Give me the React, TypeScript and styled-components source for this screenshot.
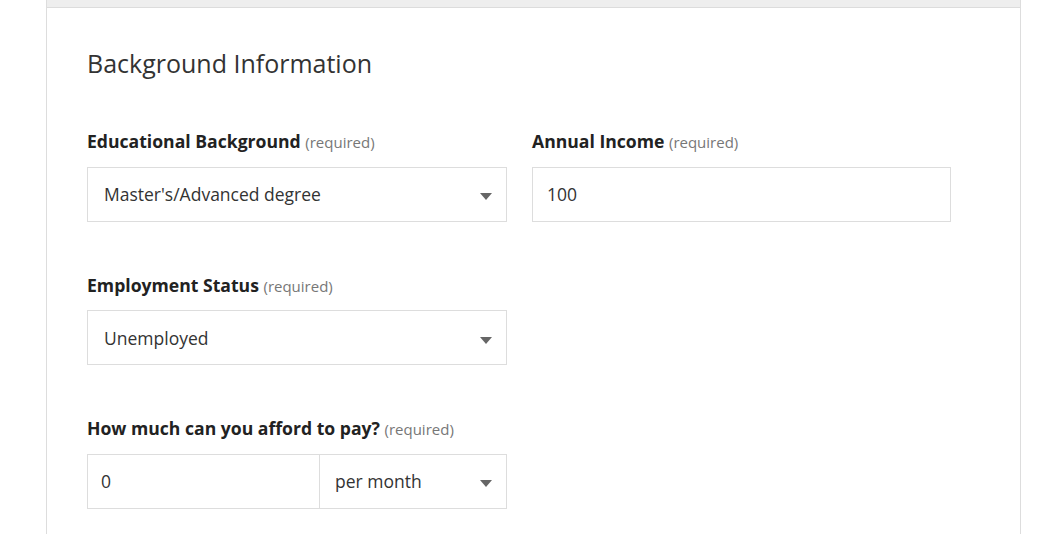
import React from "react";
import styled, { createGlobalStyle } from "styled-components";

const Global = createGlobalStyle`
  html, body { margin: 0; padding: 0; background: #fff; }
  body { font-family: "Open Sans", "Liberation Sans", sans-serif; color: #333; }
  * { box-sizing: border-box; }
`;

const Card = styled.div`
  margin-left: 46px;
  width: 975px;
  min-height: 534px;
  border-left: 1px solid #dddddd;
  border-right: 1px solid #dddddd;
  background: #fff;
`;

const TopBar = styled.div`
  height: 8px;
  background: #eeeeee;
  border-bottom: 1px solid #dcdcdc;
`;

const Body = styled.div`
  padding: 39px 0 0 40px;
`;

const Title = styled.h2`
  margin: 0;
  font-size: 25px;
  line-height: 32px;
  font-weight: 400;
  color: #333;
`;

const Grid = styled.div`
  display: grid;
  grid-template-columns: 420px 419px;
  column-gap: 25px;
  row-gap: 51px;
  margin-top: 50px;
`;

const Field = styled.div`
  display: flex;
  flex-direction: column;
`;

const Label = styled.label`
  display: block;
  height: 24px;
  font-size: 17.6px;
  line-height: 24px;
  font-weight: 700;
  color: #222;
  margin-bottom: 13.5px;
  white-space: nowrap;
`;

const Req = styled.span`
  font-size: 15px;
  line-height: 1;
  font-weight: 400;
  color: #777;
`;

const Box = styled.div<{ $pad?: number }>`
  position: relative;
  height: 55px;
  border: 1px solid #dddddd;
  display: flex;
  align-items: center;
  padding-left: ${(p) => p.$pad ?? 14}px;
  font-size: 17.5px;
  color: #333;
  background: #fff;
`;

const Arrow = styled.span`
  position: absolute;
  right: 14px;
  top: 50%;
  margin-top: -1px;
  width: 0;
  height: 0;
  border-left: 6.5px solid transparent;
  border-right: 6.5px solid transparent;
  border-top: 7px solid #666;
`;

const Group = styled.div`
  display: flex;
  height: 55px;
  border: 1px solid #dddddd;
`;

const GroupInput = styled.div`
  width: 232px;
  display: flex;
  align-items: center;
  padding-left: 13px;
  font-size: 17.5px;
  color: #333;
  border-right: 1px solid #dddddd;
`;

const GroupSelect = styled.div`
  position: relative;
  flex: 1;
  display: flex;
  align-items: center;
  padding-left: 15px;
  font-size: 17.5px;
  color: #333;
`;

const Select = ({ value }: { value: string }) => (
  <Box $pad={16}>
    {value}
    <Arrow />
  </Box>
);

export default function App() {
  return (
    <>
      <Global />
      <Card>
        <TopBar />
        <Body>
          <Title>Background Information</Title>
          <Grid>
            <Field>
              <Label>
                Educational Background <Req>(required)</Req>
              </Label>
              <Select value="Master's/Advanced degree" />
            </Field>
            <Field>
              <Label>
                Annual Income <Req>(required)</Req>
              </Label>
              <Box>100</Box>
            </Field>
            <Field>
              <Label>
                Employment Status <Req>(required)</Req>
              </Label>
              <Select value="Unemployed" />
            </Field>
            <div />
            <Field>
              <Label>
                How much can you afford to pay? <Req>(required)</Req>
              </Label>
              <Group>
                <GroupInput>0</GroupInput>
                <GroupSelect>
                  per month
                  <Arrow />
                </GroupSelect>
              </Group>
            </Field>
          </Grid>
        </Body>
      </Card>
    </>
  );
}
